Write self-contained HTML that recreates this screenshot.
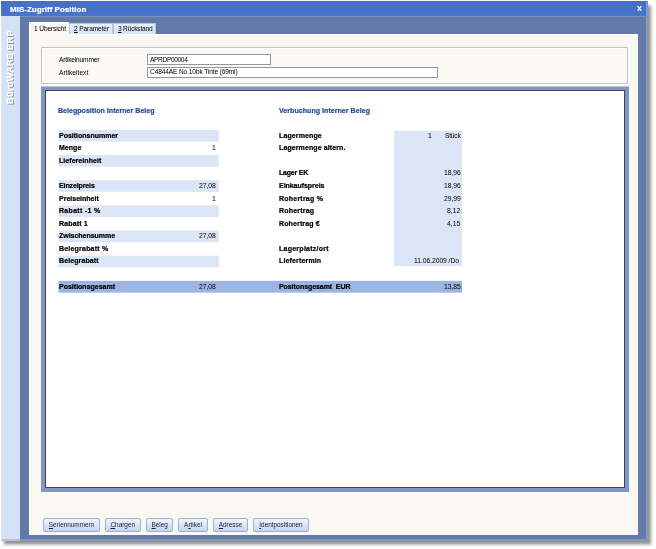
<!DOCTYPE html><html lang="de"><head><meta charset="utf-8"><title>MIS-Zugriff Position</title><style>html,body{margin:0;padding:0;background:#fff;}
body{width:656px;height:549px;overflow:hidden;position:relative;font-family:"Liberation Sans",sans-serif;}
#shadow{position:absolute;left:1px;top:1px;width:647px;height:540px;background:#627aa8;box-shadow:3px 3.5px 3px rgba(40,40,30,.5);}
#win{position:absolute;left:0;top:0;width:656px;height:549px;will-change:transform;}
#win>*{position:absolute;}
#titlebar{left:1px;top:1px;width:647px;height:15px;background:linear-gradient(#4570c8,#4672c8 50%,#4876ce);border-top:1px solid #4a6cc0;border-right:2px solid #7f9ad8;box-sizing:border-box;}
#frame{left:20px;top:16px;width:628px;height:525px;background:#627aa8;border-top:1px solid #7890c0;border-right:2px solid #8598c4;border-bottom:2px solid #8598c4;box-sizing:border-box;}
#side{left:1px;top:16px;width:19px;height:525px;background:#d4e2f6;border-left:1px solid #dfe6ee;border-bottom:2px solid #b4c2de;box-sizing:border-box;}
#sidetxt{position:absolute;left:0;top:0;transform-origin:0 0;transform:translate(2.7px,88px) rotate(-90deg);-webkit-text-stroke:0.35px #fff;white-space:nowrap;font-weight:bold;font-size:9.2px;letter-spacing:0.28px;color:#fff;text-shadow:-1px 1px 0 #7f8aa0;line-height:10px;}
#page{left:29px;top:34px;width:609px;height:501px;background:#f9f8f2;border-left:1px solid #fff;border-top:1px solid #fff;box-sizing:border-box;}
.tab{top:23px;height:11px;background:linear-gradient(#e6effc,#d6e3f7);border:1px solid #b4c5e4;border-bottom:none;box-sizing:border-box;}
#tabact{left:29px;top:22px;width:40px;height:13px;background:#f9f8f2;border-left:1px solid #fff;border-top:1px solid #fff;box-sizing:border-box;}
#group{left:41px;top:47px;width:587px;height:37px;border:1px solid #c2c2be;box-sizing:border-box;border-radius:1px;box-shadow:1px 1px 0 #fff, inset 1px 1px 0 #fff;}
.inp{background:#fff;border:1px solid #92979f;}
#panel{left:41px;top:86px;width:588px;height:406px;box-sizing:border-box;background:#fff;border:4px solid #8296c2;box-shadow:inset 1px 1px 0 #3a4866, inset -1px -1px 0 #3a4866;}
.btn{top:517.5px;height:14.5px;box-sizing:border-box;border:1px solid #9db1d8;border-radius:2px;background:linear-gradient(#f0f5fd,#dde8f8 45%,#c3d4ef);text-align:center;font-size:6.4px;line-height:12.6px;color:#141c3c;white-space:nowrap;}
.btn span{display:inline-block;}
#close{left:637px;top:3px;font-size:9px;font-weight:bold;color:#fff;line-height:10px;}
.t{white-space:nowrap;line-height:12px;height:12px;color:#000;transform:rotate(0.02deg);}
.b{font-weight:bold;color:#000;-webkit-text-stroke:0.22px currentColor;}
.h{color:#2b4b95;}
.title{color:#fff;font-weight:bold;-webkit-text-stroke:0.2px #fff;transform:translateY(-0.45px) rotate(0.02deg);}
u{text-decoration:underline;}
#stripes{left:0;top:0;}
#paneltop{left:41px;top:86px;width:588px;height:1px;background:#bcc6dc;}
</style></head><body>
<div id="shadow"></div><div id="win">
<div id="titlebar"></div>
<div id="side"><div id="sidetxt">BüroWARE ERP</div></div>
<div id="frame"></div>
<div id="page"></div>
<div class="tab" style="left:69px;width:44px"></div><div class="tab" style="left:113px;width:43px"></div><div id="tabact"></div>
<div id="group"></div>
<div class="inp" style="left:147px;top:54px;width:122px;height:8.5px"></div>
<div class="inp" style="left:147px;top:67px;width:289px;height:8.5px"></div>
<div id="panel"></div><div id="paneltop"></div>
<svg id="stripes" width="656" height="549" viewBox="0 0 656 549">
<rect x="58.5" y="129.90" width="160.4" height="11.60" fill="#dce5f5"/>
<rect x="58.5" y="155.06" width="160.4" height="11.60" fill="#dce5f5"/>
<rect x="58.5" y="180.22" width="160.4" height="11.60" fill="#dce5f5"/>
<rect x="58.5" y="205.38" width="160.4" height="11.60" fill="#dce5f5"/>
<rect x="58.5" y="230.54" width="160.4" height="11.60" fill="#dce5f5"/>
<rect x="58.5" y="255.70" width="160.4" height="11.60" fill="#dce5f5"/>
<rect x="394" y="130.7" width="68" height="135.3" fill="#dce5f5"/>
<rect x="58.5" y="280.86" width="403.5" height="11.80" fill="#9ab4e4"/>
</svg>
<div class="btn" style="left:43.0px;width:57.0px"><span><u>S</u>eriennummern</span></div>
<div class="btn" style="left:104.5px;width:36.5px"><span><u>C</u>hargen</span></div>
<div class="btn" style="left:146.0px;width:27.3px"><span><u>B</u>eleg</span></div>
<div class="btn" style="left:178.0px;width:30.0px"><span>A<u>r</u>tikel</span></div>
<div class="btn" style="left:213.0px;width:35.0px"><span><u>A</u>dresse</span></div>
<div class="btn" style="left:252.7px;width:56.6px"><span><u>I</u>dentpositionen</span></div>
<div id="close">x</div>
<span class="t title" id="t0" style="left:10.00px;top:3.70px;font-size:8.0px;letter-spacing:0.015px">MIS-Zugriff Position</span>
<span class="t" id="t1" style="left:34.30px;top:22.70px;font-size:6.6px;letter-spacing:-0.124px">1 Übersicht</span>
<span class="t" id="t2" style="left:74.30px;top:23.30px;font-size:6.6px;letter-spacing:-0.118px"><u>2</u> Parameter</span>
<span class="t" id="t3" style="left:117.50px;top:23.30px;font-size:6.6px;letter-spacing:-0.198px"><u>3</u> Rückstand</span>
<span class="t" id="t4" style="left:59.00px;top:53.60px;font-size:6.6px;letter-spacing:-0.171px">Artikelnummer</span>
<span class="t" id="t5" style="left:59.00px;top:66.60px;font-size:6.6px;letter-spacing:0.031px">Artikeltext</span>
<span class="t" id="t6" style="left:150.00px;top:53.60px;font-size:6.6px;letter-spacing:-0.357px">APRDP00004</span>
<span class="t" id="t7" style="left:150.00px;top:66.40px;font-size:6.6px;letter-spacing:-0.135px">C4844AE No.10bk Tinte (69ml)</span>
<span class="t b h" id="t8" style="left:58.30px;top:104.80px;font-size:7px;letter-spacing:0.046px">Belegposition Interner Beleg</span>
<span class="t b h" id="t9" style="left:278.70px;top:104.80px;font-size:7px;letter-spacing:0.061px">Verbuchung Interner Beleg</span>
<span class="t b" id="t10" style="left:58.50px;top:129.60px;font-size:7px;letter-spacing:-0.009px">Positionsnummer</span>
<span class="t b" id="t11" style="left:58.50px;top:142.18px;font-size:7px;letter-spacing:0.025px">Menge</span>
<span class="t" id="t12" style="right:440.20px;top:142.18px;font-size:6.8px;letter-spacing:0.000px">1</span>
<span class="t b" id="t13" style="left:58.50px;top:154.76px;font-size:7px;letter-spacing:0.052px">Liefereinheit</span>
<span class="t b" id="t14" style="left:58.50px;top:179.92px;font-size:7px;letter-spacing:-0.116px">Einzelpreis</span>
<span class="t" id="t15" style="right:440.24px;top:179.92px;font-size:6.8px;letter-spacing:-0.044px">27,08</span>
<span class="t b" id="t16" style="left:58.50px;top:192.50px;font-size:7px;letter-spacing:0.009px">Preiseinheit</span>
<span class="t" id="t17" style="right:440.20px;top:192.50px;font-size:6.8px;letter-spacing:0.000px">1</span>
<span class="t b" id="t18" style="left:58.50px;top:205.08px;font-size:7px;letter-spacing:0.306px">Rabatt -1 %</span>
<span class="t b" id="t19" style="left:58.50px;top:217.66px;font-size:7px;letter-spacing:0.146px">Rabatt 1</span>
<span class="t b" id="t20" style="left:58.50px;top:230.24px;font-size:7px;letter-spacing:-0.025px">Zwischensumme</span>
<span class="t" id="t21" style="right:440.24px;top:230.24px;font-size:6.8px;letter-spacing:-0.044px">27,08</span>
<span class="t b" id="t22" style="left:58.50px;top:242.82px;font-size:7px;letter-spacing:0.208px">Belegrabatt %</span>
<span class="t b" id="t23" style="left:58.50px;top:255.40px;font-size:7px;letter-spacing:0.107px">Belegrabatt</span>
<span class="t b" id="t24" style="left:58.50px;top:280.56px;font-size:7px;letter-spacing:0.005px">Positionsgesamt</span>
<span class="t" id="t25" style="right:440.24px;top:280.56px;font-size:6.8px;letter-spacing:-0.044px">27,08</span>
<span class="t b" id="t26" style="left:278.70px;top:129.60px;font-size:7px;letter-spacing:0.117px">Lagermenge</span>
<span class="t" id="t27" style="right:224.10px;top:129.60px;font-size:6.8px;letter-spacing:0.000px">1</span>
<span class="t" id="t28" style="right:195.60px;top:129.60px;font-size:6.6px;letter-spacing:-0.201px">Stück</span>
<span class="t b" id="t29" style="left:278.70px;top:142.18px;font-size:7px;letter-spacing:0.107px">Lagermenge altern.</span>
<span class="t b" id="t30" style="left:278.70px;top:167.34px;font-size:7px;letter-spacing:-0.217px">Lager EK</span>
<span class="t" id="t31" style="right:195.44px;top:167.34px;font-size:6.8px;letter-spacing:-0.044px">18,96</span>
<span class="t b" id="t32" style="left:278.70px;top:179.92px;font-size:7px;letter-spacing:-0.040px">Einkaufspreis</span>
<span class="t" id="t33" style="right:195.44px;top:179.92px;font-size:6.8px;letter-spacing:-0.044px">18,96</span>
<span class="t b" id="t34" style="left:278.70px;top:192.50px;font-size:7px;letter-spacing:0.225px">Rohertrag %</span>
<span class="t" id="t35" style="right:195.44px;top:192.50px;font-size:6.8px;letter-spacing:-0.044px">29,99</span>
<span class="t b" id="t36" style="left:278.70px;top:205.08px;font-size:7px;letter-spacing:0.205px">Rohertrag</span>
<span class="t" id="t37" style="right:195.41px;top:205.08px;font-size:6.8px;letter-spacing:-0.010px">8,12</span>
<span class="t b" id="t38" style="left:278.70px;top:217.66px;font-size:7px;letter-spacing:0.136px">Rohertrag €</span>
<span class="t" id="t39" style="right:195.41px;top:217.66px;font-size:6.8px;letter-spacing:-0.010px">4,15</span>
<span class="t b" id="t40" style="left:278.70px;top:242.82px;font-size:7px;letter-spacing:0.257px">Lagerplatz/ort</span>
<span class="t b" id="t41" style="left:278.70px;top:255.40px;font-size:7px;letter-spacing:0.152px">Liefertermin</span>
<span class="t" id="t42" style="right:197.27px;top:255.40px;font-size:6.8px;letter-spacing:-0.071px">11.06.2009 /Do</span>
<span class="t b" id="t43" style="left:278.70px;top:280.56px;font-size:7px;letter-spacing:-0.071px">Positonsgesamt&nbsp; EUR</span>
<span class="t" id="t44" style="right:195.44px;top:280.56px;font-size:6.8px;letter-spacing:-0.044px">13,85</span>
</div></body></html>
